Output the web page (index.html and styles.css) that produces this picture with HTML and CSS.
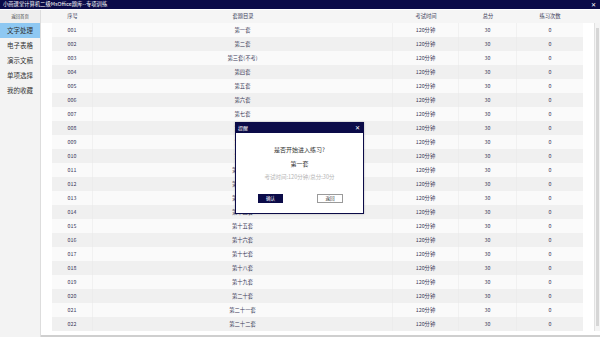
FILE: index.html
```html
<!DOCTYPE html>
<html lang="zh-CN">
<head>
<meta charset="utf-8">
<title>小画课堂计算机二级MsOffice题库--专项训练</title>
<link rel="stylesheet" href="styles.css">
</head>
<body>
<div class="app">
  <div class="titlebar">
    <span class="title">小画课堂计算机二级MsOffice题库--专项训练</span>
    <span class="close">✕</span>
  </div>
  <div class="main">
    <aside class="sidebar">
      <div class="side-head">返回首页</div>
      <div class="nav active">文字处理</div>
      <div class="nav">电子表格</div>
      <div class="nav">演示文稿</div>
      <div class="nav">单项选择</div>
      <div class="nav">我的收藏</div>
    </aside>
    <section class="content">
      <div class="thead">
        <div class="cell">序号</div>
        <div class="cell">套题目录</div>
        <div class="cell">考试时间</div>
        <div class="cell">总分</div>
        <div class="cell">练习次数</div>
      </div>
      <div class="tbody-wrap">
        <div class="rows">
          <div class="row"><div class="cell">001</div><div class="cell">第一套</div><div class="cell">120分钟</div><div class="cell">30</div><div class="cell">0</div></div>
          <div class="row"><div class="cell">002</div><div class="cell">第二套</div><div class="cell">120分钟</div><div class="cell">30</div><div class="cell">0</div></div>
          <div class="row"><div class="cell">003</div><div class="cell">第三套(不考)</div><div class="cell">120分钟</div><div class="cell">30</div><div class="cell">0</div></div>
          <div class="row"><div class="cell">004</div><div class="cell">第四套</div><div class="cell">120分钟</div><div class="cell">30</div><div class="cell">0</div></div>
          <div class="row"><div class="cell">005</div><div class="cell">第五套</div><div class="cell">120分钟</div><div class="cell">30</div><div class="cell">0</div></div>
          <div class="row"><div class="cell">006</div><div class="cell">第六套</div><div class="cell">120分钟</div><div class="cell">30</div><div class="cell">0</div></div>
          <div class="row"><div class="cell">007</div><div class="cell">第七套</div><div class="cell">120分钟</div><div class="cell">30</div><div class="cell">0</div></div>
          <div class="row"><div class="cell">008</div><div class="cell">第八套</div><div class="cell">120分钟</div><div class="cell">30</div><div class="cell">0</div></div>
          <div class="row"><div class="cell">009</div><div class="cell">第九套</div><div class="cell">120分钟</div><div class="cell">30</div><div class="cell">0</div></div>
          <div class="row"><div class="cell">010</div><div class="cell">第十套</div><div class="cell">120分钟</div><div class="cell">30</div><div class="cell">0</div></div>
          <div class="row"><div class="cell">011</div><div class="cell">第十一套</div><div class="cell">120分钟</div><div class="cell">30</div><div class="cell">0</div></div>
          <div class="row"><div class="cell">012</div><div class="cell">第十二套</div><div class="cell">120分钟</div><div class="cell">30</div><div class="cell">0</div></div>
          <div class="row"><div class="cell">013</div><div class="cell">第十三套</div><div class="cell">120分钟</div><div class="cell">30</div><div class="cell">0</div></div>
          <div class="row"><div class="cell">014</div><div class="cell">第十四套</div><div class="cell">120分钟</div><div class="cell">30</div><div class="cell">0</div></div>
          <div class="row"><div class="cell">015</div><div class="cell">第十五套</div><div class="cell">120分钟</div><div class="cell">30</div><div class="cell">0</div></div>
          <div class="row"><div class="cell">016</div><div class="cell">第十六套</div><div class="cell">120分钟</div><div class="cell">30</div><div class="cell">0</div></div>
          <div class="row"><div class="cell">017</div><div class="cell">第十七套</div><div class="cell">120分钟</div><div class="cell">30</div><div class="cell">0</div></div>
          <div class="row"><div class="cell">018</div><div class="cell">第十八套</div><div class="cell">120分钟</div><div class="cell">30</div><div class="cell">0</div></div>
          <div class="row"><div class="cell">019</div><div class="cell">第十九套</div><div class="cell">120分钟</div><div class="cell">30</div><div class="cell">0</div></div>
          <div class="row"><div class="cell">020</div><div class="cell">第二十套</div><div class="cell">120分钟</div><div class="cell">30</div><div class="cell">0</div></div>
          <div class="row"><div class="cell">021</div><div class="cell">第二十一套</div><div class="cell">120分钟</div><div class="cell">30</div><div class="cell">0</div></div>
          <div class="row"><div class="cell">022</div><div class="cell">第二十二套</div><div class="cell">120分钟</div><div class="cell">30</div><div class="cell">0</div></div>
        </div>
        <div class="vscroll"><div class="arrow up"></div><div class="thumb"></div><div class="arrow down"></div></div>
      </div>
      <div class="hscroll"></div>
    </section>
  </div>

  <div class="dialog">
    <div class="dlg-title"><span>提醒</span><span class="dlg-close">✕</span></div>
    <div class="dlg-body">
      <div class="line">是否开始进入练习?</div>
      <div class="line second">第一套</div>
      <div class="line info">考试时间:120分钟/总分:30分</div>
      <div class="buttons">
        <div class="btn primary">确认</div>
        <div class="btn">返回</div>
      </div>
    </div>
  </div>
</div>
</body>
</html>
```
FILE: styles.css
```css
* { box-sizing: border-box; }
html, body { margin: 0; padding: 0; }
body {
  width: 600px;
  height: 337px;
  overflow: hidden;
  background: #ffffff;
  font-family: "Noto Sans CJK SC", "Noto Sans", sans-serif;
  color: #3c3c5a;
}
.app {
  position: relative;
  width: 600px;
  height: 337px;
  display: flex;
  flex-direction: column;
}
.titlebar {
  height: 9px;
  background: #0b0b48;
  color: #ffffff;
  display: flex;
  align-items: center;
  justify-content: space-between;
  padding: 0 4px 0 3px;
  font-size: 5.3px;
  line-height: 9px;
}
.titlebar .close { font-size: 6px; }
.main {
  flex: 1;
  display: flex;
  padding-top: 1px;
  min-height: 0;
}
.sidebar {
  width: 41px;
  background: #f3f3f3;
  border-right: 1px solid #dddddd;
  display: flex;
  flex-direction: column;
}
.side-head {
  height: 13px;
  line-height: 13px;
  text-align: center;
  font-size: 4.4px;
  background: #eeeeee;
  color: #444;
}
.nav {
  height: 15px;
  line-height: 15px;
  text-align: center;
  font-size: 6.5px;
  color: #333333;
}
.nav.active { background: #8ec8f2; }
.content {
  flex: 1;
  display: flex;
  flex-direction: column;
  min-width: 0;
}
.thead {
  height: 13px;
  background: #f5f5f5;
  display: grid;
  grid-template-columns: 41px 300px 66px 58px 66px;
  padding-left: 11px;
  font-size: 5.3px;
  line-height: 13px;
}
.cell { text-align: center; white-space: nowrap; }
.tbody-wrap {
  display: flex;
  height: 308px;
}
.rows {
  margin-left: 11px;
  width: 531px;
  display: flex;
  flex-direction: column;
}
.row {
  height: 14px;
  display: grid;
  grid-template-columns: 41px 300px 66px 58px 66px;
  font-size: 5.3px;
  line-height: 14px;
  background: #fafafa;
}
.row:nth-child(even) { background: #f0f0f0; }
.row .cell { border-right: 1px solid #f1f1f1; }
.row:nth-child(even) .cell { border-right-color: #ececec; }
.row .cell:last-child { border-right: none; }
.vscroll {
  margin-left: auto;
  width: 6px;
  background: #f4f4f4;
  border-left: 1px solid #e2e2e2;
  display: flex;
  flex-direction: column;
  align-items: center;
}
.vscroll .arrow { height: 4px; width: 100%; }
.vscroll .thumb {
  flex: 1;
  width: 3px;
  background: #d6d6d6;
  margin: 1px 0;
}
.hscroll {
  margin-top: auto;
  height: 2px;
  background: #cfcfcf;
}
.dialog {
  position: absolute;
  left: 235px;
  top: 122px;
  width: 129px;
  height: 92px;
  background: #ffffff;
  border: 1px solid #0b0b48;
  box-shadow: 0 0 2px rgba(0,0,0,0.25);
  display: flex;
  flex-direction: column;
}
.dlg-title {
  height: 10px;
  background: #0b0b48;
  color: #ffffff;
  font-size: 5px;
  line-height: 10px;
  display: flex;
  justify-content: space-between;
  padding: 0 3px 0 2px;
}
.dlg-close { font-size: 5.5px; }
.dlg-body {
  flex: 1;
  display: flex;
  flex-direction: column;
  align-items: center;
  padding-top: 11px;
  color: #333333;
}
.line {
  font-size: 6px;
  line-height: 12px;
}
.line.second { margin-top: 2px; }
.line.info {
  margin-top: 1px;
  color: #b4b4b4;
  font-size: 5.5px;
}
.buttons {
  align-self: stretch;
  display: flex;
  justify-content: space-between;
  padding: 0 20px 0 22px;
  margin-top: 11px;
}
.btn {
  width: 26px;
  height: 9px;
  line-height: 7px;
  font-size: 4.6px;
  text-align: center;
  border: 1px solid #9a9a9a;
  background: #ffffff;
  color: #333;
}
.btn.primary {
  width: 25px;
  background: #0b0b48;
  border-color: #0b0b48;
  color: #ffffff;
}
```
